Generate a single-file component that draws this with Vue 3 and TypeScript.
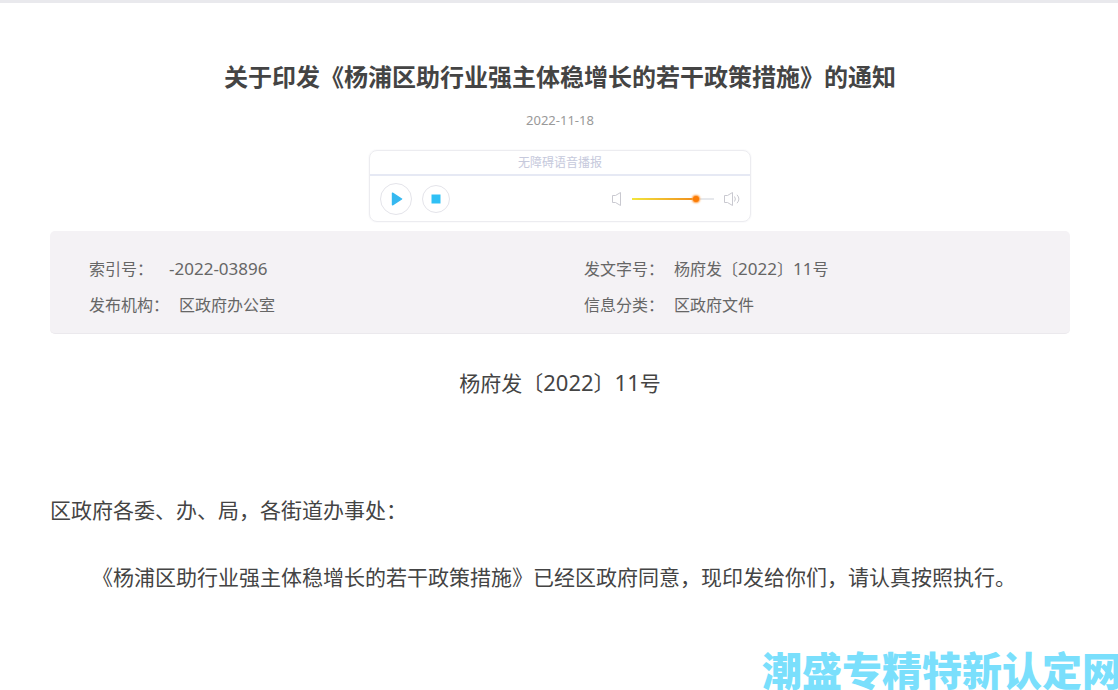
<script setup lang="ts">
import { computed, ref } from 'vue'

const volume = ref(80)
const fill = computed(() => `${volume.value}%`)
</script>

<template>
  <main class="page">
    <article class="article">
      <h1 class="title">关于印发《杨浦区助行业强主体稳增长的若干政策措施》的通知</h1>
      <time class="date" datetime="2022-11-18">2022-11-18</time>

      <section class="player" aria-label="无障碍语音播报">
        <div class="player-head">无障碍语音播报</div>
        <div class="player-body">
          <button class="round play" type="button" aria-label="播放">
            <svg width="12" height="14" viewBox="0 0 12 14"><path d="M1.5 1.2v11.6L10.6 7z" fill="#35b8f0" stroke="#35b8f0" stroke-width="1.4" stroke-linejoin="round" /></svg>
          </button>
          <button class="round stop" type="button" aria-label="停止">
            <svg width="10" height="10" viewBox="0 0 10 10"><path d="M.5.5h9v9h-9z" fill="#2fc0f5" /></svg>
          </button>
          <div class="volume">
            <svg width="12" height="16" viewBox="0 0 12 16" fill="none" stroke="#c9c9d0"><path d="M1.5 4.5H4.5L9.5 1.5V14.5L4.5 11.5H1.5Z" /></svg>
            <input v-model.number="volume" class="slider" type="range" min="0" max="100" aria-label="音量" :style="{ '--fill': fill }" />
            <svg width="18" height="16" viewBox="0 0 18 16" fill="none" stroke="#c9c9d0"><path d="M1.5 4.5H4.5L9.5 1.5V14.5L4.5 11.5H1.5Z" /><path d="M11.5 5.5Q13.3 8 11.5 10.5M14 3.8Q17.8 8 14 12.2" /></svg>
          </div>
        </div>
      </section>

      <dl class="meta">
        <div class="item"><dt>索引号：</dt><dd class="index-no"><span class="num">-2022-03896</span></dd></div>
        <div class="item"><dt>发文字号：</dt><dd>杨府发〔<span class="num">2022</span>〕<span class="num">11</span>号</dd></div>
        <div class="item"><dt>发布机构：</dt><dd>区政府办公室</dd></div>
        <div class="item"><dt>信息分类：</dt><dd>区政府文件</dd></div>
      </dl>

      <p class="doc-no">杨府发〔<span class="num">2022</span>〕<span class="num">11</span>号</p>
      <p class="to">区政府各委、办、局，各街道办事处：</p>
      <p class="body">《杨浦区助行业强主体稳增长的若干政策措施》已经区政府同意，现印发给你们，请认真按照执行。</p>
    </article>
    <div class="watermark">潮盛专精特新认定网</div>
  </main>
</template>

<style>
body {
  margin: 0;
  background: #fff;
}
</style>

<style scoped>
.page {
  position: relative;
  box-sizing: border-box;
  min-height: 100vh;
  overflow: hidden;
  border-top: 3px solid #e9e9ed;
  padding: 0 48px 0 50px;
  color: #444;
  font-family: "Noto Sans", "Noto Sans CJK SC", sans-serif;
}
.article {
  display: flex;
  flex-direction: column;
}
.title {
  margin: 53px 0 0;
  font-size: 24px;
  line-height: 40px;
  font-weight: 700;
  text-align: center;
  font-family: "Noto Sans CJK SC", sans-serif;
}
.date {
  margin-top: 14px;
  font-size: 13px;
  line-height: 20px;
  color: #999;
  text-align: center;
}
.player {
  align-self: center;
  box-sizing: border-box;
  width: 382px;
  max-width: 100%;
  margin-top: 20px;
  border: 1px solid #ececf0;
  border-radius: 8px;
  box-shadow: 0 0 2px #eeeef2;
}
.player-head {
  border-bottom: 2px solid #e6e9f4;
  font-size: 12px;
  line-height: 23px;
  color: #c6c9dc;
  text-align: center;
}
.player-body {
  display: flex;
  align-items: center;
  gap: 10px;
  height: 45px;
  padding: 0 9px 0 10px;
}
.round {
  display: flex;
  align-items: center;
  justify-content: center;
  box-sizing: border-box;
  padding: 0;
  border: 1px solid #e4e4ea;
  border-radius: 50%;
  background: #fff;
}
.play {
  width: 32px;
  height: 32px;
  padding-left: 2px;
}
.stop {
  width: 28px;
  height: 28px;
}
.volume {
  display: flex;
  align-items: center;
  gap: 9px;
  margin-left: auto;
}
.slider {
  appearance: none;
  width: 82px;
  height: 16px;
  margin: 0;
  background: transparent;
}
.slider::-webkit-slider-runnable-track {
  height: 2px;
  background: linear-gradient(90deg, #f2e63c, #f08a1c) 0 0 / var(--fill) 100% no-repeat, #e6e8ec;
}
.slider::-webkit-slider-thumb {
  appearance: none;
  width: 6px;
  height: 6px;
  margin-top: -2px;
  border-radius: 50%;
  background: #fb7c05;
  box-shadow: 0 0 2px 1px #ff9a3c;
}
.meta {
  display: grid;
  grid-template-columns: 1fr 1fr;
  margin: 9px 0 0;
  padding: 20px 15px 10px;
  border-bottom: 1px solid #ebe9ed;
  border-radius: 5px;
  background: #f4f2f5;
  font-size: 16px;
  line-height: 36px;
  color: #666;
}
.item {
  display: flex;
  gap: 10px;
  padding-left: 24px;
}
.item dd {
  margin: 0;
}
.item .index-no {
  padding-left: 6px;
}
.meta .num {
  font-size: 17px;
}
.doc-no,
.to,
.body {
  margin: 0;
  font-size: 21px;
  line-height: 42px;
}
.doc-no {
  margin-top: 27px;
  text-align: center;
}
.doc-no .num {
  font-size: 22px;
}
.to {
  margin-top: 85px;
}
.body {
  margin-top: 25px;
  text-indent: 42px;
}
.watermark {
  position: absolute;
  right: -4px;
  bottom: 0;
  font-size: 40px;
  line-height: 42px;
  font-weight: 900;
  white-space: nowrap;
  color: #7adffc;
  font-family: "Noto Sans CJK SC", sans-serif;
}
</style>
